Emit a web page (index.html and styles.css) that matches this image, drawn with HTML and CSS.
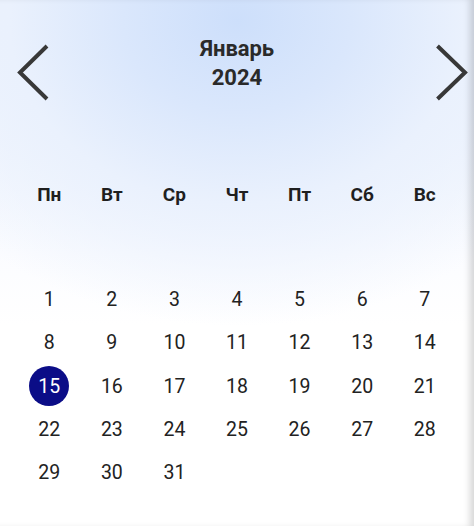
FILE: index.html
```html
<!DOCTYPE html>
<html lang="ru">
<head>
<meta charset="utf-8">
<title>Календарь</title>
<link rel="stylesheet" href="styles.css">
</head>
<body>
<div class="page">
  <header class="header">
    <svg class="nav nav-prev" width="44" height="60" viewBox="0 0 44 60" aria-label="Назад">
      <path d="M41 3 L14 29.5 L41 56" fill="none" stroke="#383838" stroke-width="4"/>
    </svg>
    <div class="title">
      <div>Январь</div>
      <div>2024</div>
    </div>
    <svg class="nav nav-next" width="44" height="60" viewBox="0 0 44 60" aria-label="Вперёд">
      <path d="M13.5 3 L41 29.5 L13.5 56" fill="none" stroke="#383838" stroke-width="4"/>
    </svg>
  </header>

  <div class="weekdays">
    <div>Пн</div><div>Вт</div><div>Ср</div><div>Чт</div><div>Пт</div><div>Сб</div><div>Вс</div>
  </div>

  <div class="days">
    <div class="day">1</div><div class="day">2</div><div class="day">3</div><div class="day">4</div><div class="day">5</div><div class="day">6</div><div class="day">7</div>
    <div class="day">8</div><div class="day">9</div><div class="day">10</div><div class="day">11</div><div class="day">12</div><div class="day">13</div><div class="day">14</div>
    <div class="day"><span class="selected">15</span></div><div class="day">16</div><div class="day">17</div><div class="day">18</div><div class="day">19</div><div class="day">20</div><div class="day">21</div>
    <div class="day">22</div><div class="day">23</div><div class="day">24</div><div class="day">25</div><div class="day">26</div><div class="day">27</div><div class="day">28</div>
    <div class="day">29</div><div class="day">30</div><div class="day">31</div>
  </div>
</div>
</body>
</html>
```

FILE: styles.css
```css
html, body {
  margin: 0;
  padding: 0;
}

body {
  width: 474px;
  height: 526px;
  overflow: hidden;
  background: #ffffff;
  font-family: Roboto, "Noto Sans", "DejaVu Sans", sans-serif;
  color: #222222;
}

.page {
  width: 474px;
  height: 526px;
  box-sizing: border-box;
  background:
    radial-gradient(ellipse 80% 58% at 50% 4%, #cddffb 0%, #dae7fc 30%, #eaf1fd 60%, rgba(255,255,255,0) 100%),
    linear-gradient(180deg, #eaf1fc 0%, #f3f7fe 30%, #fbfcff 48%, #ffffff 62%);
  box-shadow: inset -7px 0 7px -3px rgba(0, 0, 0, 0.16);
}

.header {
  display: grid;
  grid-template-columns: 1fr auto 1fr;
  align-items: start;
  padding: 34px 6px 0 6px;
}

.nav {
  display: block;
  margin-top: 9px;
}

.nav-prev {
  justify-self: start;
}

.nav-next {
  justify-self: end;
}

.title {
  text-align: center;
  font-size: 22px;
  font-weight: 700;
  line-height: 29px;
  color: #2a2a2a;
}

.weekdays {
  display: grid;
  grid-template-columns: repeat(7, 1fr);
  padding: 0 18px;
  margin-top: 77px;
  font-size: 19px;
  font-weight: 700;
  line-height: 30px;
  text-align: center;
  color: #1f1f1f;
}

.days {
  display: grid;
  grid-template-columns: repeat(7, 1fr);
  grid-auto-rows: 43.3px;
  padding: 0 18px;
  margin-top: 68px;
  font-size: 19.5px;
  font-weight: 400;
}

.day {
  display: flex;
  align-items: center;
  justify-content: center;
  color: #222222;
}

.selected {
  display: flex;
  align-items: center;
  justify-content: center;
  width: 40px;
  height: 40px;
  border-radius: 50%;
  background: #0b0d87;
  color: #ffffff;
}
```
